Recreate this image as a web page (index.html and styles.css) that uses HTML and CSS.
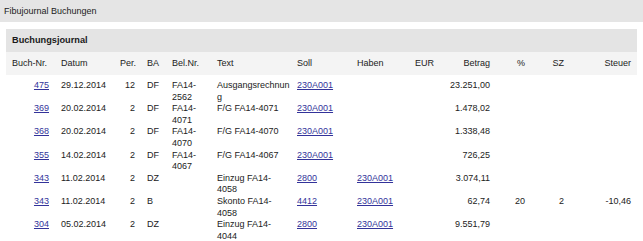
FILE: index.html
```html
<!DOCTYPE html>
<html lang="de">
<head>
<meta charset="utf-8">
<title>Fibujournal Buchungen</title>
<link rel="stylesheet" href="styles.css">
</head>
<body>
<div class="topbar">Fibujournal Buchungen</div>
<div class="panel">
  <div class="panel-head">Buchungsjournal</div>
  <table class="journal">
    <colgroup>
      <col class="c-nr"><col class="c-datum"><col class="c-per"><col class="c-ba"><col class="c-bel"><col class="c-text"><col class="c-soll"><col class="c-haben"><col class="c-eur"><col class="c-betrag"><col class="c-proz"><col class="c-sz"><col class="c-steuer">
    </colgroup>
    <thead>
      <tr>
        <th>Buch-Nr.</th><th>Datum</th><th class="per">Per.</th><th>BA</th><th>Bel.Nr.</th><th class="txt">Text</th><th>Soll</th><th>Haben</th><th>EUR</th><th class="r">Betrag</th><th class="r">%</th><th class="r">SZ</th><th class="r">Steuer</th>
      </tr>
    </thead>
    <tbody>
      <tr class="first">
        <td class="r"><a href="#">475</a></td><td>29.12.2014</td><td class="r">12</td><td>DF</td><td>FA14-2562</td><td class="txt">Ausgangsrechnung</td><td><a href="#">230A001</a></td><td></td><td></td><td class="r">23.251,00</td><td class="r"></td><td class="r"></td><td class="r"></td>
      </tr>
      <tr>
        <td class="r"><a href="#">369</a></td><td>20.02.2014</td><td class="r">2</td><td>DF</td><td>FA14-4071</td><td class="txt">F/G FA14-4071</td><td><a href="#">230A001</a></td><td></td><td></td><td class="r">1.478,02</td><td class="r"></td><td class="r"></td><td class="r"></td>
      </tr>
      <tr>
        <td class="r"><a href="#">368</a></td><td>20.02.2014</td><td class="r">2</td><td>DF</td><td>FA14-4070</td><td class="txt">F/G FA14-4070</td><td><a href="#">230A001</a></td><td></td><td></td><td class="r">1.338,48</td><td class="r"></td><td class="r"></td><td class="r"></td>
      </tr>
      <tr>
        <td class="r"><a href="#">355</a></td><td>14.02.2014</td><td class="r">2</td><td>DF</td><td>FA14-4067</td><td class="txt">F/G FA14-4067</td><td><a href="#">230A001</a></td><td></td><td></td><td class="r">726,25</td><td class="r"></td><td class="r"></td><td class="r"></td>
      </tr>
      <tr>
        <td class="r"><a href="#">343</a></td><td>11.02.2014</td><td class="r">2</td><td>DZ</td><td></td><td class="txt">Einzug FA14-4058</td><td><a href="#">2800</a></td><td><a href="#">230A001</a></td><td></td><td class="r">3.074,11</td><td class="r"></td><td class="r"></td><td class="r"></td>
      </tr>
      <tr>
        <td class="r"><a href="#">343</a></td><td>11.02.2014</td><td class="r">2</td><td>B</td><td></td><td class="txt">Skonto FA14-4058</td><td><a href="#">4412</a></td><td><a href="#">230A001</a></td><td></td><td class="r">62,74</td><td class="r">20</td><td class="r">2</td><td class="r">-10,46</td>
      </tr>
      <tr>
        <td class="r"><a href="#">304</a></td><td>05.02.2014</td><td class="r">2</td><td>DZ</td><td></td><td class="txt">Einzug FA14-4044</td><td><a href="#">2800</a></td><td><a href="#">230A001</a></td><td></td><td class="r">9.551,79</td><td class="r"></td><td class="r"></td><td class="r"></td>
      </tr>
    </tbody>
  </table>
</div>
</body>
</html>
```

FILE: styles.css
```css
html, body {
  margin: 0;
  padding: 0;
  background: #ffffff;
}

body {
  font-family: "Liberation Sans", Arial, sans-serif;
  font-size: 9px;
  color: #222222;
}

.topbar {
  height: 22px;
  line-height: 22px;
  padding-left: 4px;
  background: #e5e5e5;
  color: #222222;
}

.panel {
  margin: 7px 6px 0 6px;
}

.panel-head {
  height: 23px;
  line-height: 23px;
  padding-left: 6px;
  background: #e4e4e4;
  font-weight: bold;
  font-size: 9.2px;
  color: #1a1a1a;
}

.journal {
  width: 631px;
  table-layout: fixed;
  border-collapse: collapse;
  border-spacing: 0;
}

.c-nr { width: 49px; }
.c-datum { width: 59px; }
.c-per { width: 27px; }
.c-ba { width: 25px; }
.c-bel { width: 45px; }
.c-text { width: 80px; }
.c-soll { width: 60px; }
.c-haben { width: 58px; }
.c-eur { width: 31px; }
.c-betrag { width: 56px; }
.c-proz { width: 35px; }
.c-sz { width: 39px; }
.c-steuer { width: 67px; }

.journal th,
.journal td {
  padding: 0 6px;
  line-height: 11.6px;
  text-align: left;
  vertical-align: top;
  overflow-wrap: break-word;
}

.journal th {
  height: 23px;
  vertical-align: middle;
  font-weight: normal;
  white-space: nowrap;
  background: #f4f4f4;
  color: #222222;
}

.journal th.per {
  padding-right: 0;
}

.journal .txt {
  padding-right: 0.5px;
}

.journal .r {
  text-align: right;
}

.journal tr.first td {
  padding-top: 5px;
}

.journal a {
  color: #33339a;
  text-decoration: underline;
}
```
